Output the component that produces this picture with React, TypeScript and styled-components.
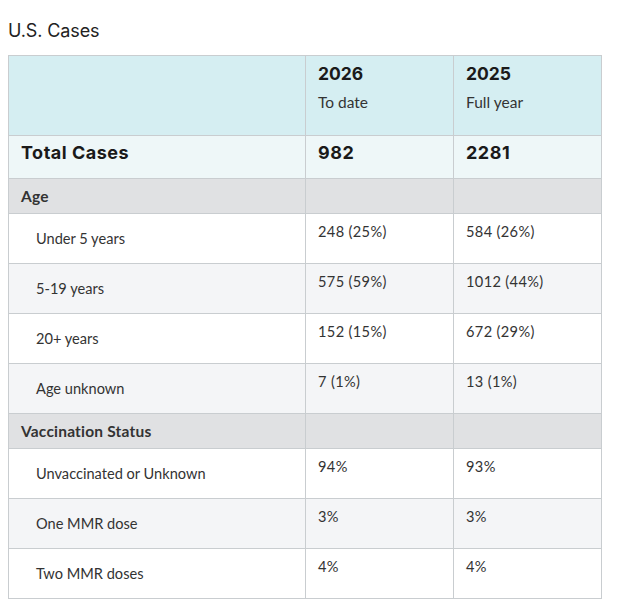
import styled, { createGlobalStyle } from "styled-components";

const GlobalStyle = createGlobalStyle`
  body {
    margin: 0;
    background: #ffffff;
    font-family: "Lato", "Noto Sans", sans-serif;
    color: #333;
  }
`;

const Page = styled.div`
  padding: 19px 8px 0 8px;
`;

const Title = styled.h2`
  margin: 0 0 12px 0;
  font-family: "Inter", "Noto Sans", sans-serif;
  font-weight: 400;
  font-size: 18px;
  line-height: 24px;
  color: #222;
  letter-spacing: -0.1px;
`;

const Table = styled.table`
  border-collapse: collapse;
  width: 594px;
  table-layout: fixed;
  font-size: 14.6px;
`;

const HeadRow = styled.tr`
  background: #d5eef2;
  height: 80px;
`;

const HeadCell = styled.th`
  border: 1px solid #c9cdd0;
  text-align: left;
  vertical-align: top;
  padding: 7px 12px 0 12px;
  font-weight: 400;
`;

const Year = styled.div`
  font-family: "Inter", "Noto Sans", sans-serif;
  font-weight: 700;
  font-size: 17.5px;
  line-height: 22px;
  color: #1a1a1a;
`;

const Sub = styled.div`
  margin-top: 8px;
  font-size: 15.5px;
  color: #333;
`;

const TotalRow = styled.tr`
  background: #eef7f8;
  height: 43px;
`;

const TotalCell = styled.td`
  border: 1px solid #c9cdd0;
  padding: 0 12px 9px 12px;
  vertical-align: middle;
  font-family: "Inter", "Noto Sans", sans-serif;
  font-weight: 700;
  font-size: 18px;
  letter-spacing: 0.5px;
  color: #1a1a1a;
`;

const SectionRow = styled.tr`
  background: #e0e1e3;
  height: 35px;
`;

const SectionCell = styled.td`
  border: 1px solid #c9cdd0;
  padding: 0 12px 0 12px;
  vertical-align: middle;
  font-weight: 700;
  font-size: 15.5px;
  letter-spacing: 0.2px;
  color: #333;
`;

const DataRow = styled.tr<{ $alt: boolean }>`
  background: ${(p) => (p.$alt ? "#f4f5f7" : "#ffffff")};
  height: 50px;
`;

const LabelCell = styled.td`
  border: 1px solid #c9cdd0;
  padding: 0 12px 0 27px;
  vertical-align: middle;
  color: #333;
`;

const ValueCell = styled.td`
  border: 1px solid #c9cdd0;
  padding: 9px 12px 0 12px;
  vertical-align: top;
  letter-spacing: 0.35px;
  color: #333;
`;

type Item = { label: string; now: string; last: string };

const sections: { title: string; items: Item[] }[] = [
  {
    title: "Age",
    items: [
      { label: "Under 5 years", now: "248 (25%)", last: "584 (26%)" },
      { label: "5-19 years", now: "575 (59%)", last: "1012 (44%)" },
      { label: "20+ years", now: "152 (15%)", last: "672 (29%)" },
      { label: "Age unknown", now: "7 (1%)", last: "13 (1%)" },
    ],
  },
  {
    title: "Vaccination Status",
    items: [
      { label: "Unvaccinated or Unknown", now: "94%", last: "93%" },
      { label: "One MMR dose", now: "3%", last: "3%" },
      { label: "Two MMR doses", now: "4%", last: "4%" },
    ],
  },
];

export default function App() {
  return (
    <>
      <GlobalStyle />
      <Page>
        <Title>U.S. Cases</Title>
        <Table>
          <colgroup>
            <col style={{ width: 297 }} />
            <col style={{ width: 148 }} />
            <col style={{ width: 148 }} />
          </colgroup>
          <thead>
            <HeadRow>
              <HeadCell />
              <HeadCell>
                <Year>2026</Year>
                <Sub>To date</Sub>
              </HeadCell>
              <HeadCell>
                <Year>2025</Year>
                <Sub>Full year</Sub>
              </HeadCell>
            </HeadRow>
          </thead>
          <tbody>
            <TotalRow>
              <TotalCell>Total Cases</TotalCell>
              <TotalCell>982</TotalCell>
              <TotalCell>2281</TotalCell>
            </TotalRow>
            {sections.map((s) => (
              <SectionGroup key={s.title} title={s.title} items={s.items} />
            ))}
          </tbody>
        </Table>
      </Page>
    </>
  );
}

function SectionGroup({ title, items }: { title: string; items: Item[] }) {
  return (
    <>
      <SectionRow>
        <SectionCell>{title}</SectionCell>
        <SectionCell />
        <SectionCell />
      </SectionRow>
      {items.map((it, i) => (
        <DataRow key={it.label} $alt={i % 2 === 1}>
          <LabelCell>{it.label}</LabelCell>
          <ValueCell>{it.now}</ValueCell>
          <ValueCell>{it.last}</ValueCell>
        </DataRow>
      ))}
    </>
  );
}
